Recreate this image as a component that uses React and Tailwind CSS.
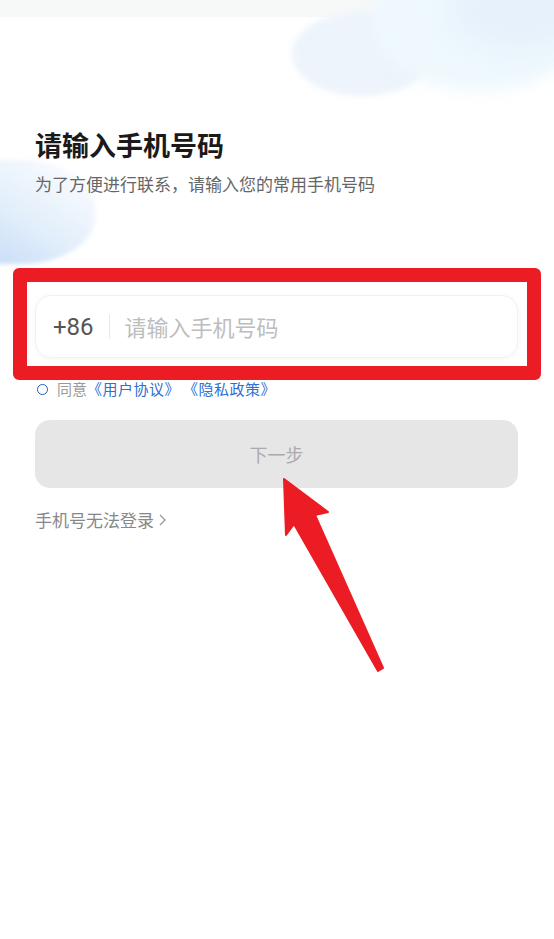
import React from "react";

export default function App() {
  return (
    <div className="relative w-[554px] h-[939px] overflow-hidden bg-white" style={{ fontFamily: '"Noto Sans CJK SC", "Noto Sans", sans-serif' }}>
      {/* background decoration */}
      <div className="absolute inset-x-0 top-0 h-[17px] bg-[#f7f9f9]" />
      <div className="absolute left-[292px] top-[12px] w-[140px] h-[84px] rounded-[50%] bg-[#edf4fb] blur-[3px]" />
      <div className="absolute left-[370px] top-[-45px] w-[220px] h-[135px] rounded-[50%] bg-[#eef8fd] blur-[8px]" />
      <div className="absolute left-[450px] top-[-30px] w-[140px] h-[80px] rounded-[50%] bg-[#e6f1fb] blur-[12px]" />
      <div className="absolute left-[-70px] top-[160px] w-[165px] h-[104px] rounded-[45%] bg-gradient-to-tr from-[#b9d4f4] via-[#e2eefb] to-white blur-[2px]" />

      {/* content */}
      <div className="relative flex flex-col pl-[35px] pr-[36px]">
        <h1 className="mt-[127px] text-[27px] leading-[36px] font-bold text-[#1a1a1a]">请输入手机号码</h1>
        <p className="mt-[10px] text-[17px] leading-[22px] text-[#666]">为了方便进行联系，请输入您的常用手机号码</p>

        <div className="mt-[100px] h-[63px] flex items-center rounded-[16px] bg-white border border-[#f1f1f1] shadow-[0_1px_6px_rgba(0,0,0,0.04)]">
          <span className="ml-[17px] text-[24px] text-[#555]" style={{ fontFamily: 'Roboto, sans-serif' }}>+86</span>
          <span className="ml-[15px] w-px h-[25px] bg-[#e9e9e9]" />
          <span className="ml-[15px] text-[22px] text-[#bdbdbd]">请输入手机号码</span>
        </div>

        <div className="mt-[20px] flex items-center h-[22px] text-[15px] leading-[22px]">
          <span className="ml-[2px] w-[11px] h-[11px] rounded-full border-[1.7px] border-[#1f62bb]" />
          <span className="ml-[9px] text-[#9a9a9a]">同意</span>
          <span className="text-[#2f6fcf] tracking-[0.5px]">《用户协议》</span>
          <span className="ml-[3px] text-[#2f6fcf] tracking-[0.5px]">《隐私政策》</span>
        </div>

        <button className="mt-[20px] h-[68px] rounded-[15px] bg-[#e6e6e6] text-[18px] text-[#ababab]">下一步</button>

        <div className="mt-[21px] flex items-center text-[17px] leading-[22px] text-[#888]">
          <span>手机号无法登录</span>
          <svg width="10" height="14" viewBox="0 0 10 14" className="ml-[3px]">
            <path d="M3 2 L8 7 L3 12" fill="none" stroke="#999" strokeWidth="1.3" />
          </svg>
        </div>
      </div>

      {/* annotation overlays */}
      <div className="absolute left-[13px] top-[268px] w-[528px] h-[112px] border-[14px] border-[#ec1c24] rounded-[6px]" />
      <svg className="absolute left-0 top-0" width="554" height="939" viewBox="0 0 554 939">
        <polygon
          points="284,479 328,512 315,515 383,668 378,671 294,524 286,535"
          fill="#ec1c24"
          stroke="#ec1c24"
          strokeWidth="2"
          strokeLinejoin="round"
        />
      </svg>
    </div>
  );
}
